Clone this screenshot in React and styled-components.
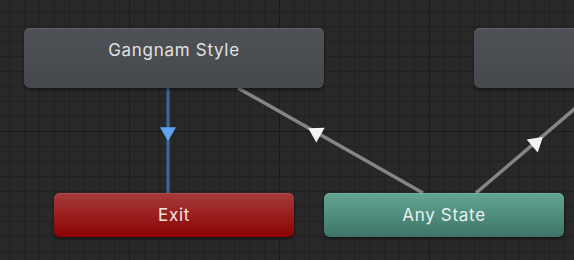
import React from "react";
import styled, { createGlobalStyle, css } from "styled-components";

const Global = createGlobalStyle`
  html, body { margin: 0; padding: 0; background: #282828; }
  body { font-family: Inter, "Noto Sans", "Liberation Sans", sans-serif; }
`;

const Canvas = styled.div`
  position: relative;
  width: 574px;
  height: 260px;
  overflow: hidden;
  background-color: #282828;
  background-image:
    linear-gradient(to right, #1b1b1b 1px, transparent 1px),
    linear-gradient(to bottom, #1b1b1b 1px, transparent 1px),
    linear-gradient(to right, #212121 1px, transparent 1px),
    linear-gradient(to bottom, #212121 1px, transparent 1px);
  background-size: 150px 150px, 150px 150px, 15px 15px, 15px 15px;
  background-position: 129px 0, 0 131px, 9px 0, 0 11px;
`;

const variants = {
  normal: css`
    background: linear-gradient(to bottom, #4e5155, #45484c);
    box-shadow: inset 0 1px 0 #5d6064, 0 2px 3px rgba(0, 0, 0, 0.45);
    color: #e2e2e2;
    padding-top: 12px;
  `,
  exit: css`
    background: linear-gradient(to bottom, #a63b3b, #8d0202);
    box-shadow: inset 0 1px 0 #b24a4a, 0 2px 3px rgba(0, 0, 0, 0.45);
    color: #f2e6e6;
    align-items: center;
  `,
  any: css`
    background: linear-gradient(to bottom, #61a692, #3e7469);
    box-shadow: inset 0 1px 0 #72b3a0, 0 2px 3px rgba(0, 0, 0, 0.45);
    color: #e8f1ee;
    align-items: center;
  `,
};

const StateNode = styled.div`
  position: absolute;
  left: ${(p) => p.$x}px;
  top: ${(p) => p.$y}px;
  width: ${(p) => p.$w}px;
  height: ${(p) => p.$h}px;
  box-sizing: border-box;
  border-radius: 6px;
  display: flex;
  justify-content: center;
  align-items: flex-start;
  font-size: 17px;
  line-height: 20px;
  letter-spacing: 0.7px;
  ${(p) => variants[p.$variant]}
`;

const Links = styled.svg`
  position: absolute;
  left: 0;
  top: 0;
  width: 574px;
  height: 260px;
  pointer-events: none;
`;

function arrow(x1, y1, x2, y2, cx, cy, len = 14, half = 8.5) {
  const dx = x2 - x1;
  const dy = y2 - y1;
  const l = Math.hypot(dx, dy);
  const ux = dx / l;
  const uy = dy / l;
  const px = -uy;
  const py = ux;
  const tip = [cx + ux * len * 0.55, cy + uy * len * 0.55];
  const bx = cx - ux * len * 0.45;
  const by = cy - uy * len * 0.45;
  return `${tip[0]},${tip[1]} ${bx + px * half},${by + py * half} ${bx - px * half},${by - py * half}`;
}

export default function App() {
  return (
    <>
      <Global />
      <Canvas>
        <Links viewBox="0 0 574 260">
          <line x1="168" y1="86" x2="168" y2="195" stroke="#3a6aa0" strokeWidth="3" />
          <polygon points={arrow(168, 88, 168, 193, 168, 133.5, 14, 8)} fill="#5ea2f2" />
          <line x1="423" y1="193" x2="238" y2="88" stroke="#858585" strokeWidth="3.5" />
          <polygon points={arrow(423, 193, 238, 88, 315, 132)} fill="#f4f4f4" />
          <line x1="476" y1="193" x2="592" y2="94" stroke="#858585" strokeWidth="3.5" />
          <polygon points={arrow(476, 193, 592, 94, 537, 142)} fill="#f4f4f4" />
        </Links>
        <StateNode $variant="normal" $x={24} $y={28} $w={300} $h={60}>
          Gangnam Style
        </StateNode>
        <StateNode $variant="normal" $x={474} $y={28} $w={300} $h={60} />
        <StateNode $variant="exit" $x={54} $y={193} $w={240} $h={44}>
          Exit
        </StateNode>
        <StateNode $variant="any" $x={324} $y={193} $w={240} $h={44}>
          Any State
        </StateNode>
      </Canvas>
    </>
  );
}
